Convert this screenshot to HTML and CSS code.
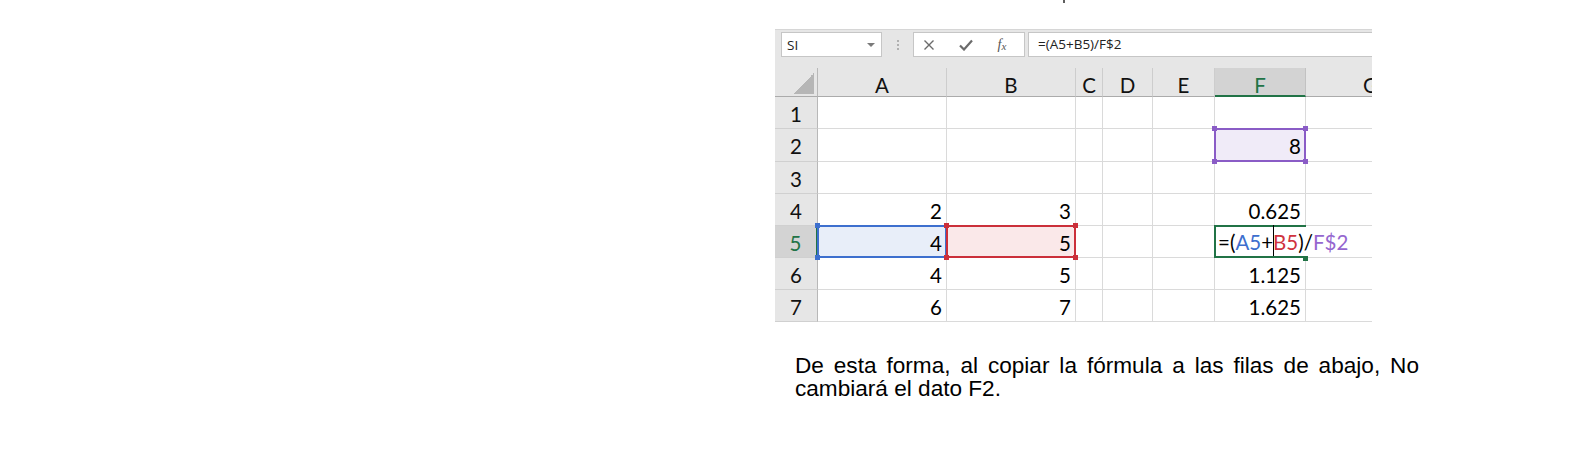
FILE: index.html
```html
<!DOCTYPE html>
<html lang="es">
<head>
<meta charset="utf-8">
<title>Referencia mixta</title>
<link rel="stylesheet" href="styles.css">
</head>
<body>
<div class="page">
  <div class="topmark"></div>
  <div class="excel">
    <div class="toolbar">
      <div class="namebox"><span>SI</span><i class="ddarrow"></i></div>
      <div class="sep"><i></i><i></i><i></i></div>
      <div class="fxbox">
        <span class="ico ico-x"><svg width="12" height="12" viewBox="0 0 12 12"><path d="M1.5 1.5 L10.5 10.5 M10.5 1.5 L1.5 10.5" stroke="#6b6b6b" stroke-width="1.4" fill="none"/></svg></span>
        <span class="ico ico-ok"><svg width="14" height="12" viewBox="0 0 14 12"><path d="M1 6.5 L5 10.5 L13 1.5" stroke="#6b6b6b" stroke-width="2.2" fill="none"/></svg></span>
        <span class="ico ico-fx">f<span class="fx-x">x</span></span>
      </div>
      <div class="formula">=(A5+B5)/F$2</div>
    </div>
    <div class="grid">
      <div class="corner"></div>
      <div class="ch">A</div><div class="ch">B</div><div class="ch">C</div><div class="ch">D</div><div class="ch">E</div><div class="ch sel">F</div><div class="ch">G</div>

      <div class="rh">1</div>
      <div class="c"></div><div class="c"></div><div class="c"></div><div class="c"></div><div class="c"></div><div class="c"></div><div class="c"></div>

      <div class="rh">2</div>
      <div class="c"></div><div class="c"></div><div class="c"></div><div class="c"></div><div class="c"></div><div class="c rng purple">8</div><div class="c"></div>

      <div class="rh">3</div>
      <div class="c"></div><div class="c"></div><div class="c"></div><div class="c"></div><div class="c"></div><div class="c"></div><div class="c"></div>

      <div class="rh">4</div>
      <div class="c">2</div><div class="c">3</div><div class="c"></div><div class="c"></div><div class="c"></div><div class="c">0.625</div><div class="c"></div>

      <div class="rh sel">5</div>
      <div class="c rng blue">4</div><div class="c rng red">5</div><div class="c"></div><div class="c"></div><div class="c"></div>
      <div class="c edit"><span class="ftxt">=(<span class="t-blue">A5</span>+<span class="caret"></span><span class="t-red">B5</span>)/<span class="t-purple">F$2</span></span></div>
      <div class="c g5"></div>

      <div class="rh">6</div>
      <div class="c">4</div><div class="c">5</div><div class="c"></div><div class="c"></div><div class="c"></div><div class="c">1.125</div><div class="c"></div>

      <div class="rh">7</div>
      <div class="c">6</div><div class="c">7</div><div class="c"></div><div class="c"></div><div class="c"></div><div class="c">1.625</div><div class="c"></div>
    </div>
  </div>
  <p class="caption">De esta forma, al copiar la fórmula a las filas de abajo, No cambiará el dato F2.</p>
</div>
</body>
</html>
```
FILE: styles.css
```css
* { box-sizing: border-box; }
body { margin: 0; background: #fff; }

.page { display: flex; flex-direction: column; align-items: flex-start; }

.topmark { width: 2px; height: 3px; background: #5e5e5e; margin-left: 1063px; }

.excel {
  margin: 26px 0 0 775px;
  width: 597px;
  height: 293px;
  overflow: hidden;
  background: #fff;
}

/* toolbar */
.toolbar {
  height: 39px;
  background: #e6e6e6;
  border-top: 1px solid #d6d6d6;
  display: flex;
  align-items: flex-start;
  padding: 2px 0 0 6px;
  font-family: "Open Sans", "Noto Sans", sans-serif;
  font-size: 13.5px;
  color: #222;
}
.namebox {
  width: 101px; height: 25px;
  background: #fff;
  border: 1px solid #c6c6c6;
  display: flex; align-items: center; justify-content: space-between;
  padding: 0 6px 0 5px;
}
.ddarrow {
  width: 0; height: 0;
  border-left: 4px solid transparent;
  border-right: 4px solid transparent;
  border-top: 4px solid #7a7a7a;
}
.sep {
  width: 31px; height: 25px;
  display: flex; flex-direction: column; align-items: center; justify-content: center;
  gap: 2px;
}
.sep i { display: block; width: 2px; height: 2px; background: #b0b0b0; }
.fxbox {
  width: 112px; height: 25px;
  background: #fff;
  border: 1px solid #c6c6c6;
  display: flex; align-items: center;
  padding-left: 9px;
}
.ico { display: flex; align-items: center; justify-content: center; width: 12px; height: 16px; }
.ico-ok { margin-left: 24px; width: 14px; }
.ico-fx {
  margin-left: 22px; width: 14px;
  font-family: "Liberation Serif", serif; font-style: italic; font-size: 14px; color: #555;
}
.fx-x { font-size: 11px; margin-top: 3px; }
.formula {
  flex: 1;
  height: 25px;
  margin-left: 3px;
  margin-right: -2px;
  background: #fff;
  border: 1px solid #c6c6c6;
  padding-left: 9px;
  line-height: 23px;
}

/* grid */
.grid {
  display: grid;
  grid-template-columns: 43px 129px 129px 27px 50px 62px 91px 130px;
  grid-template-rows: 29px 32px 33px 32px 32px 32px 32px 32px;
  font-family: Lato, "Open Sans", sans-serif;
  font-size: 20.5px;
  color: #000;
}
.corner {
  background: #e6e6e6 linear-gradient(135deg, transparent 50%, #b6b6b6 50%) no-repeat right 3px bottom 2px / 21px 21px;
  border-right: 1px solid #b8b8b8;
  border-bottom: 1px solid #ababab;
}
.ch {
  background: #e6e6e6;
  border-right: 1px solid #cdcdcd;
  border-bottom: 1px solid #ababab;
  text-align: center;
  line-height: 24px;
  padding-top: 5px;
  color: #111;
}
.ch.sel { background: #d3d3d3; color: #217346; border-bottom: 2px solid #217346; border-right-color: #c2c2c2; }
.rh {
  background: #e6e6e6;
  border-right: 1px solid #b8b8b8;
  border-bottom: 1px solid #d0d0d0;
  display: flex; align-items: center; justify-content: center;
  padding-top: 2px;
  color: #111;
}
.rh.sel { background: #d3d3d3; color: #217346; border-right: 2px solid #217346; }
.c {
  border-right: 1px solid #dadada;
  border-bottom: 1px solid #dadada;
  display: flex; align-items: center; justify-content: flex-end;
  padding: 2px 4px 0;
  white-space: nowrap;
}

/* reference ranges */
.rng { position: relative; }
.rng::after {
  content: "";
  position: absolute;
  inset: -1px;
  border: 2px solid var(--rc);
}
.rng::before {
  content: "";
  position: absolute;
  inset: -3px;
  z-index: 1;
  background:
    linear-gradient(var(--rc), var(--rc)) left top / 5px 5px no-repeat,
    linear-gradient(var(--rc), var(--rc)) right top / 5px 5px no-repeat,
    linear-gradient(var(--rc), var(--rc)) left bottom / 5px 5px no-repeat,
    linear-gradient(var(--rc), var(--rc)) right bottom / 5px 5px no-repeat;
}
.purple { --rc: #8a5cc6; background: #f0ebf8; }
.blue { --rc: #3d6fce; background: #e8eef9; }
.red { --rc: #cb2f3a; background: #fae8e9; }

/* cell in edit mode */
.edit {
  position: relative;
  justify-content: flex-start;
  padding: 0 0 0 3px;
  border-right-color: transparent;
}
.edit::after {
  content: "";
  position: absolute;
  top: -1px; left: -1px; bottom: -1px; right: -1px;
  border: 2px solid #217346;
  border-right: none;
}
.edit::before {
  content: "";
  position: absolute;
  right: -3px; bottom: -4px;
  width: 5px; height: 5px;
  background: #217346;
  z-index: 1;
}
.ftxt { position: relative; z-index: 2; line-height: 31px; padding-top: 2px; color: #000; }
.caret {
  display: inline-block;
  width: 1px; height: 31px;
  background: #000;
  vertical-align: top;
  margin: -2px -1px 0 0;
}
.t-blue { color: #3d6fce; }
.t-red { color: #d0333e; }
.t-purple { color: #9566cf; }
.g5 { border-right-color: transparent; }

/* caption */
.caption {
  margin: 32px 0 0 795px;
  width: 624px;
  font-family: "Liberation Sans", Arial, sans-serif;
  font-size: 22.6px;
  line-height: 23px;
  text-align: justify;
  color: #000;
}
```
